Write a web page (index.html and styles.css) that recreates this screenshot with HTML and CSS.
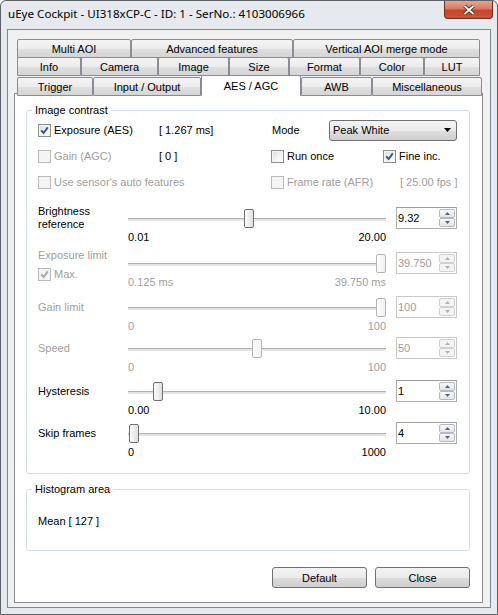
FILE: index.html
```html
<!DOCTYPE html>
<html>
<head>
<meta charset="utf-8">
<title>uEye Cockpit</title>
<link rel="stylesheet" href="styles.css">
</head>
<body>
<div class="window">
  <div class="titlebar">
    <div class="title">uEye Cockpit - UI318xCP-C - ID: 1 - SerNo.: 4103006966</div>
    <div class="close-btn">
      <svg width="12" height="10" viewBox="0 0 12 10"><path d="M1.5 1 L10.5 9 M10.5 1 L1.5 9" stroke="#4a2018" stroke-width="3.6" fill="none"/><path d="M1.5 1 L10.5 9 M10.5 1 L1.5 9" stroke="#ffffff" stroke-width="1.8" fill="none"/></svg>
    </div>
  </div>
  <div class="client">
    <div class="tabs">
      <div class="tab-row r1">
        <div class="tab">Multi AOI</div>
        <div class="tab">Advanced features</div>
        <div class="tab">Vertical AOI merge mode</div>
      </div>
      <div class="tab-row r2">
        <div class="tab">Info</div>
        <div class="tab">Camera</div>
        <div class="tab">Image</div>
        <div class="tab">Size</div>
        <div class="tab">Format</div>
        <div class="tab">Color</div>
        <div class="tab">LUT</div>
      </div>
      <div class="tab-row r3">
        <div class="tab">Trigger</div>
        <div class="tab">Input / Output</div>
        <div class="tab sel">AES / AGC</div>
        <div class="tab">AWB</div>
        <div class="tab">Miscellaneous</div>
      </div>
    </div>
    <div class="page">
      <fieldset class="group contrast">
        <legend>Image contrast</legend>
        <div class="opts">
          <div class="chk"><span class="cb"><svg viewBox="0 0 11 11"><path d="M2.2 5.4 L4.6 8 L8.8 2.4" stroke="#3f5184" stroke-width="1.9" fill="none"/></svg></span>Exposure (AES)</div>
          <div class="val">[ 1.267 ms]</div>
          <div class="mode">
            <span class="mode-lbl">Mode</span>
            <div class="combo"><span>Peak White</span><svg width="7" height="4" viewBox="0 0 7 4"><polygon points="0,0 7,0 3.5,4" fill="#000"/></svg></div>
          </div>
          <div class="chk dis"><span class="cb"></span>Gain (AGC)</div>
          <div class="val">[ 0 ]</div>
          <div class="chk"><span class="cb"></span>Run once</div>
          <div class="chk"><span class="cb"><svg viewBox="0 0 11 11"><path d="M2.2 5.4 L4.6 8 L8.8 2.4" stroke="#3f5184" stroke-width="1.9" fill="none"/></svg></span>Fine inc.</div>
          <div class="chk dis wide"><span class="cb"></span>Use sensor's auto features</div>
          <div class="chk dis"><span class="cb"></span>Frame rate (AFR)</div>
          <div class="val dis fps">[ 25.00 fps ]</div>
        </div>

        <div class="sliders">
          <div class="srow">
            <div class="slabel">Brightness<br>reference</div>
            <div class="slider">
              <div class="track-area"><div class="track"></div><div class="rail"><div class="thumb" style="left:46.6%"></div></div></div>
              <div class="ticks"><span>0.01</span><span>20.00</span></div>
            </div>
            <div class="spin"><span class="spin-val">9.32</span><div class="spin-btns"><span class="sb"><svg width="5" height="3" viewBox="0 0 5 3"><polygon points="0,3 5,3 2.5,0"/></svg></span><span class="sb"><svg width="5" height="3" viewBox="0 0 5 3"><polygon points="0,0 5,0 2.5,3"/></svg></span></div></div>
          </div>

          <div class="srow dis r-exp">
            <div class="slabel top">
              <span>Exposure limit</span>
              <div class="chk max"><span class="cb"><svg viewBox="0 0 11 11"><path d="M2.2 5.4 L4.6 8 L8.8 2.4" stroke="#a8a8a8" stroke-width="1.9" fill="none"/></svg></span>Max.</div>
            </div>
            <div class="slider">
              <div class="track-area"><div class="track"></div><div class="rail"><div class="thumb" style="left:100%"></div></div></div>
              <div class="ticks"><span>0.125 ms</span><span>39.750 ms</span></div>
            </div>
            <div class="spin"><span class="spin-val">39.750</span><div class="spin-btns"><span class="sb"><svg width="5" height="3" viewBox="0 0 5 3"><polygon points="0,3 5,3 2.5,0"/></svg></span><span class="sb"><svg width="5" height="3" viewBox="0 0 5 3"><polygon points="0,0 5,0 2.5,3"/></svg></span></div></div>
          </div>

          <div class="srow dis r-gain">
            <div class="slabel">Gain limit</div>
            <div class="slider">
              <div class="track-area"><div class="track"></div><div class="rail"><div class="thumb" style="left:100%"></div></div></div>
              <div class="ticks"><span>0</span><span>100</span></div>
            </div>
            <div class="spin"><span class="spin-val">100</span><div class="spin-btns"><span class="sb"><svg width="5" height="3" viewBox="0 0 5 3"><polygon points="0,3 5,3 2.5,0"/></svg></span><span class="sb"><svg width="5" height="3" viewBox="0 0 5 3"><polygon points="0,0 5,0 2.5,3"/></svg></span></div></div>
          </div>

          <div class="srow dis r-speed">
            <div class="slabel">Speed</div>
            <div class="slider">
              <div class="track-area"><div class="track"></div><div class="rail"><div class="thumb" style="left:50%"></div></div></div>
              <div class="ticks"><span>0</span><span>100</span></div>
            </div>
            <div class="spin"><span class="spin-val">50</span><div class="spin-btns"><span class="sb"><svg width="5" height="3" viewBox="0 0 5 3"><polygon points="0,3 5,3 2.5,0"/></svg></span><span class="sb"><svg width="5" height="3" viewBox="0 0 5 3"><polygon points="0,0 5,0 2.5,3"/></svg></span></div></div>
          </div>

          <div class="srow r-hyst">
            <div class="slabel">Hysteresis</div>
            <div class="slider">
              <div class="track-area"><div class="track"></div><div class="rail"><div class="thumb" style="left:10%"></div></div></div>
              <div class="ticks"><span>0.00</span><span>10.00</span></div>
            </div>
            <div class="spin"><span class="spin-val">1</span><div class="spin-btns"><span class="sb"><svg width="5" height="3" viewBox="0 0 5 3"><polygon points="0,3 5,3 2.5,0"/></svg></span><span class="sb"><svg width="5" height="3" viewBox="0 0 5 3"><polygon points="0,0 5,0 2.5,3"/></svg></span></div></div>
          </div>

          <div class="srow r-skip">
            <div class="slabel">Skip frames</div>
            <div class="slider">
              <div class="track-area"><div class="track"></div><div class="rail"><div class="thumb" style="left:0.4%"></div></div></div>
              <div class="ticks"><span>0</span><span>1000</span></div>
            </div>
            <div class="spin"><span class="spin-val">4</span><div class="spin-btns"><span class="sb"><svg width="5" height="3" viewBox="0 0 5 3"><polygon points="0,3 5,3 2.5,0"/></svg></span><span class="sb"><svg width="5" height="3" viewBox="0 0 5 3"><polygon points="0,0 5,0 2.5,3"/></svg></span></div></div>
          </div>
        </div>
      </fieldset>

      <fieldset class="group histo">
        <legend>Histogram area</legend>
        <div class="mean">Mean [ 127 ]</div>
      </fieldset>

      <div class="actions">
        <div class="btn">Default</div>
        <div class="btn">Close</div>
      </div>
    </div>
  </div>
</div>
</body>
</html>
```

FILE: styles.css
```css
* { box-sizing: border-box; }
html, body { margin: 0; padding: 0; }
body {
  width: 498px;
  height: 615px;
  overflow: hidden;
  background: #ffffff;
  font-family: "Liberation Sans", Arial, sans-serif;
  font-size: 11px;
  color: #000;
}

/* window frame */
.window {
  width: 498px;
  height: 615px;
  border: 1px solid #5d6065;
  border-radius: 6px 6px 0 0;
  background: #e6e9ed;
  padding: 0 6px 6px;
  display: flex;
  flex-direction: column;
}
.titlebar {
  height: 28px;
  display: flex;
  justify-content: space-between;
  align-items: flex-start;
  flex: none;
}
.title {
  font-family: "Noto Sans", "Open Sans", sans-serif;
  font-size: 11.6px;
  line-height: 26px;
  padding-left: 1px;
  color: #000;
  white-space: nowrap;
}
.close-btn {
  width: 49px;
  height: 18px;
  margin-right: -2px;
  border: 1px solid #6d2a1f;
  border-top: none;
  border-radius: 0 0 4px 4px;
  background: linear-gradient(#e9a48f 0%, #d77b64 45%, #c4452c 55%, #c9553a 100%);
  display: flex;
  align-items: center;
  justify-content: center;
}

/* client area */
.client {
  flex: 1;
  border: 1px solid #82878f;
  background: #f0f0f0;
  padding: 9px 7px 4px 6px;
  display: flex;
  flex-direction: column;
}

/* tabs */
.tabs {
  padding-left: 3px;
  margin-bottom: -1px;
  position: relative;
  z-index: 2;
}
.tab-row {
  display: grid;
  height: 19px;
  align-items: end;
}
.tab-row + .tab-row { margin-top: -1px; }
.r1 { grid-template-columns: 114px 162px 187px; }
.r2 { grid-template-columns: 64px 77px 71px 60px 71px 64px 56px; }
.r3 { grid-template-columns: 76px 108px 100px 71px 110px; }
.tab {
  height: 19px;
  border: 1px solid #898c95;
  border-radius: 2px 2px 0 0;
  background: linear-gradient(#f4f4f4 0%, #ececec 50%, #dfdfdf 52%, #d5d5d5 100%);
  display: flex;
  align-items: center;
  justify-content: center;
  white-space: nowrap;
}
.tab.sel {
  height: 21px;
  background: #ffffff;
  border-bottom: none;
  padding-bottom: 1px;
}

/* tab page */
.page {
  flex: 1;
  border: 1px solid #898c95;
  background: #ffffff;
  padding: 10px 12px 0 11px;
  display: flex;
  flex-direction: column;
  position: relative;
  z-index: 1;
}

.group {
  margin: 0;
  min-width: 0;
  border: 1px solid #d5dfe5;
  border-radius: 3px;
}
.group legend {
  padding: 0 3px;
  margin-left: -6px;
  line-height: 13px;
}
.contrast { padding: 0 11px 14px; }
.histo { margin-top: 9px; padding: 19px 11px 22px; }
.mean { line-height: 13px; }

/* options grid */
.opts {
  display: grid;
  grid-template-columns: 121px 112px 112px 1fr;
  grid-auto-rows: 26px;
  align-items: center;
}
.chk {
  display: flex;
  align-items: center;
  white-space: nowrap;
}
.chk .cb { margin-right: 3px; }
.cb {
  width: 13px;
  height: 13px;
  flex: none;
  border: 1px solid #8e8f8f;
  background: linear-gradient(135deg, #dadcde 0%, #f4f5f6 60%, #ffffff 100%);
  box-shadow: inset 0 0 0 1px #f5f5f5;
  display: flex;
  align-items: center;
  justify-content: center;
}
.cb svg { width: 11px; height: 11px; display: block; }
.dis, .dis .chk { color: #a0a0a0; }
.dis .cb, .chk.dis .cb {
  border-color: #bcbcbc;
  background: #f4f4f4;
  box-shadow: none;
}
.wide { grid-column: 1 / 3; }
.fps { padding-left: 17px; }
.mode {
  grid-column: 3 / 5;
  display: flex;
  align-items: center;
}
.mode-lbl { width: 58px; padding-left: 1px; }
.combo {
  width: 128px;
  height: 21px;
  border: 1px solid #707070;
  border-radius: 3px;
  background: linear-gradient(#f2f2f2 0%, #ebebeb 50%, #dddddd 51%, #cfcfcf 100%);
  display: flex;
  align-items: center;
  justify-content: space-between;
  padding: 0 5px 0 3px;
}
.combo svg { display: block; }

/* slider rows */
.sliders { margin-top: 12px; }
.srow {
  display: grid;
  grid-template-columns: 90px 258px 10px 61px;
  grid-template-rows: 22px 15px;
}
.r-exp { margin-top: 8px; }
.r-gain { margin-top: 7px; }
.r-speed { margin-top: 4px; }
.r-hyst { margin-top: 6px; }
.r-skip { margin-top: 5px; }
.slabel {
  grid-column: 1;
  grid-row: 1;
  align-self: center;
  line-height: 13px;
}
.slabel.top {
  grid-row: 1 / 3;
  align-self: start;
  margin-top: -3px;
  display: flex;
  flex-direction: column;
}
.chk.max { margin-top: 6px; }
.slider {
  grid-column: 2;
  grid-row: 1 / 3;
}
.track-area {
  position: relative;
  height: 22px;
}
.track {
  position: absolute;
  left: 0;
  right: 0;
  top: 11px;
  height: 3px;
  border-top: 1px solid #b2b2b2;
  background: #e4e4e4;
}
.rail {
  position: absolute;
  left: 0;
  top: 2px;
  width: calc(100% - 10px);
  height: 19px;
}
.thumb {
  position: absolute;
  top: 0;
  width: 10px;
  height: 19px;
  border: 1px solid #6f6f6f;
  border-radius: 2px;
  background: linear-gradient(to right, #fdfdfd 0%, #eeeeee 50%, #dedede 100%);
}
.dis .thumb {
  border-color: #b4b4b4;
  background: linear-gradient(to right, #fcfcfc, #f0f0f0);
}
.ticks {
  display: flex;
  justify-content: space-between;
  margin-top: 2px;
  line-height: 13px;
}

/* spin box */
.spin {
  grid-column: 4;
  grid-row: 1;
  height: 22px;
  display: flex;
  border: 1px solid #abadb3;
  border-top-color: #9a9ca2;
  background: #fff;
  padding: 1px;
}
.spin-val {
  flex: 1;
  line-height: 18px;
}
.spin-btns {
  width: 16px;
  display: flex;
  flex-direction: column;
}
.sb {
  flex: 1;
  border: 1px solid #b6b9bf;
  border-radius: 2px;
  background: linear-gradient(#f8f8f8, #e5e5e5);
  display: flex;
  align-items: center;
  justify-content: center;
}
.sb svg { display: block; fill: #4d6185; }
.dis .spin { border-color: #c9c9c9; }
.dis .sb { border-color: #d0d0d0; background: #f4f4f4; }
.dis .sb svg { fill: #b0b0b0; }

/* bottom buttons */
.actions {
  margin-top: 16px;
  display: flex;
  justify-content: flex-end;
  gap: 8px;
  padding-right: 0;
}
.btn {
  width: 95px;
  height: 21px;
  border: 1px solid #707070;
  border-radius: 3px;
  background: linear-gradient(#f2f2f2 0%, #ebebeb 50%, #dddddd 51%, #cfcfcf 100%);
  display: flex;
  align-items: center;
  justify-content: center;
}
```
